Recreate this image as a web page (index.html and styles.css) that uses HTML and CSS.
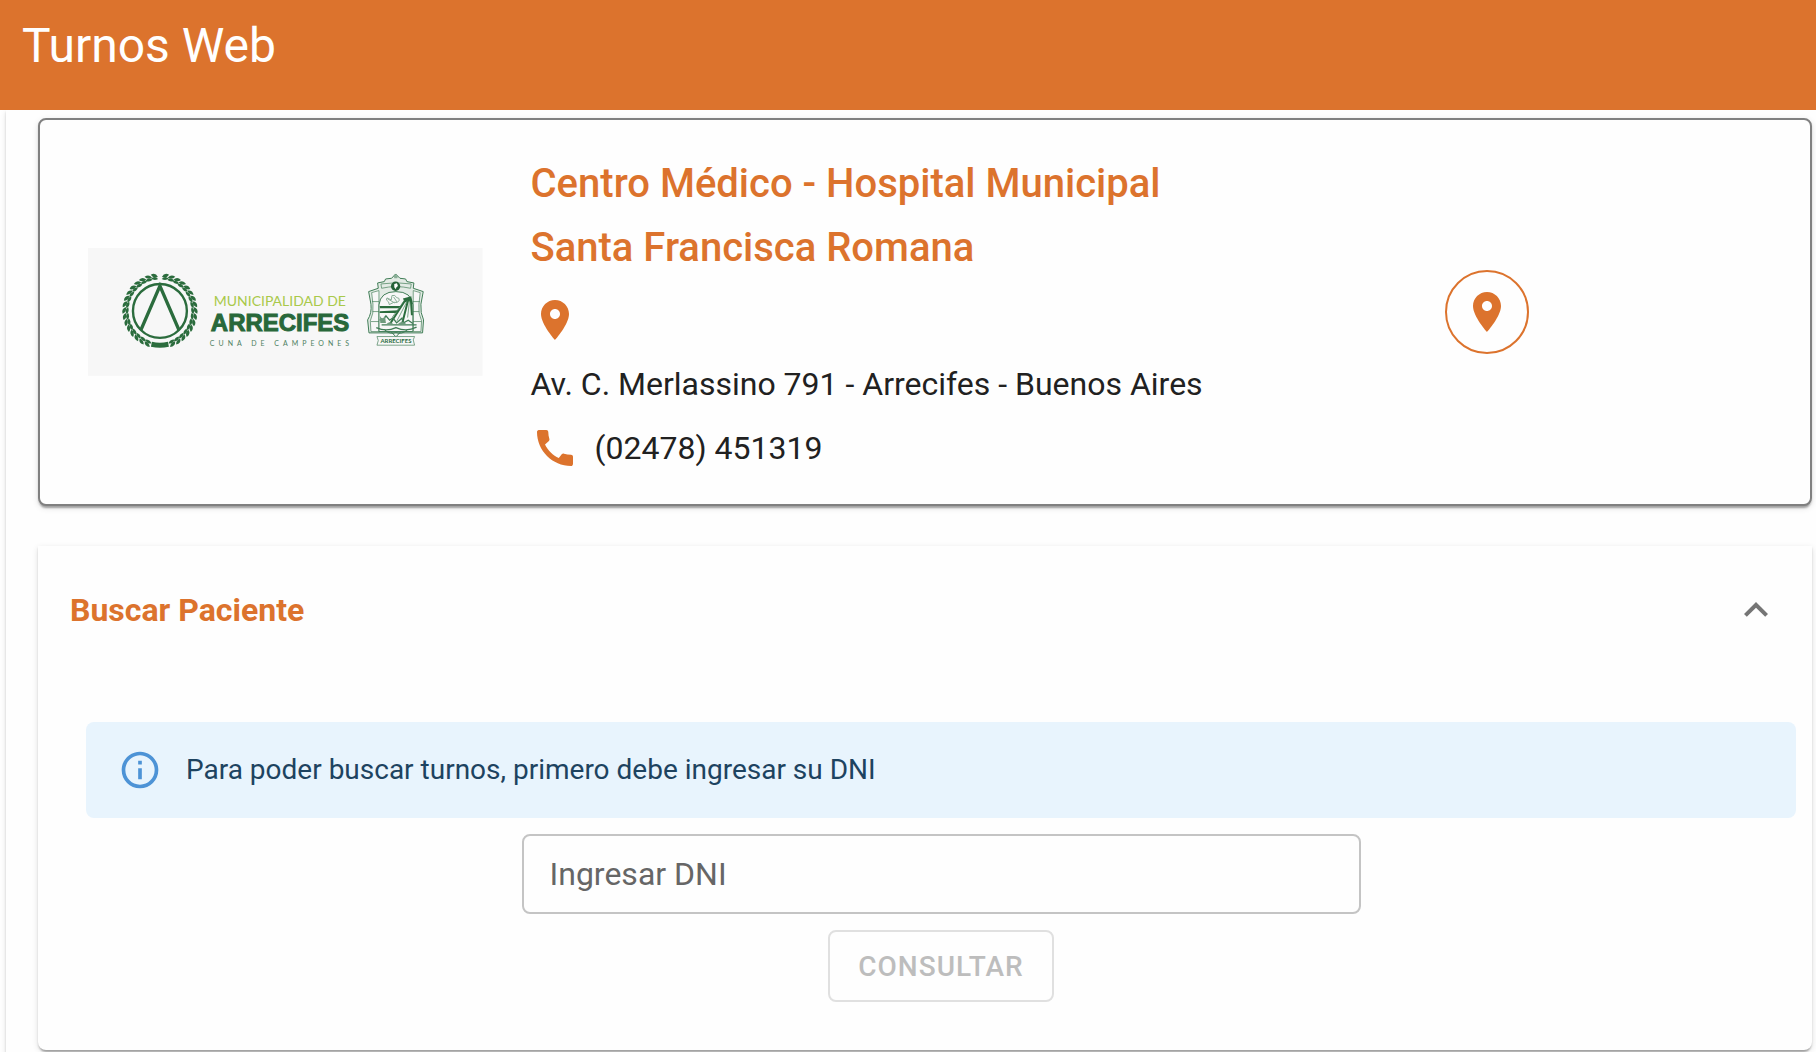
FILE: index.html
```html
<!DOCTYPE html>
<html lang="es">
<head>
    <meta charset="utf-8" />
    <meta name="viewport" content="width=device-width, initial-scale=1" />
    <title>Turnos Web</title>
    <link rel="stylesheet" href="styles.css">
</head>
<body>
    <header class="topbar">
        <h1>Turnos Web</h1>
    </header>

    <main class="container">
        <section class="card centro">
            <div class="centro_logo">
                <svg viewBox="0 0 395 128" role="img" aria-label="Municipalidad de Arrecifes">
                    <defs>
                        <!-- laurel: one pair of leaves, doubled up to 16 -->
                        <g id="l1">
                            <path d="M-1-32Q2-36 6-33Q3-30-1-32Z" />
                            <path d="M-1-34Q1-39 6-37Q4-33-1-34Z" />
                        </g>
                        <g id="l2"><use href="#l1" /><use href="#l1" transform="rotate(10)" /></g>
                        <g id="l4"><use href="#l2" /><use href="#l2" transform="rotate(20)" /></g>
                        <g id="l8"><use href="#l4" /><use href="#l4" transform="rotate(40)" /></g>
                        <g id="l16"><use href="#l8" /><use href="#l8" transform="rotate(80)" /></g>
                    </defs>
                    <rect width="395" height="128" fill="#f7f7f7" />

                    <g transform="translate(72 63)" fill="#2b6c3d">
                        <use href="#l16" transform="rotate(5)" />
                        <use href="#l16" transform="scale(-1 1) rotate(5)" />
                        <path d="M-8 31Q0 33 8 31L9 36Q0 38-9 36Z" />
                        <circle r="27" fill="none" stroke="#2b6c3d" stroke-width="2.4" />
                        <path d="M-19 19L0-25L19 19" fill="none" stroke="#2b6c3d" stroke-width="3.4" />
                    </g>

                    <text class="logo_muni" x="126" y="58">MUNICIPALIDAD DE</text>
                    <text class="logo_arre" x="123" y="83">ARRECIFES</text>
                    <text class="logo_cuna" x="122" y="98">CUNA DE CAMPEONES</text>

                    <!-- escudo -->
                    <g transform="translate(262 17) scale(.3333)" fill="none" stroke="#3f7c55" stroke-width="3">
                        <path d="M57 80L86 70L84 54L104 50L108 42L126 40L138 27L151 40L168 42L172 50L193 54L191 70L221 80L214 118Q212 145 222 165L219 204H58L54 165Q67 145 64 118Z" fill="#e3ebe5" />
                        <path d="M66 83L88 77V200H64L62 168Q73 146 70 118ZM212 83L191 77V200H214L216 168Q205 146 208 118Z" stroke-width="2" fill="#f7f7f7" />
                        <path d="M88 200V120Q92 80 139 80Q186 80 190 120V200Z" fill="#f7f7f7" />
                        <path d="M67 110H88M69 140H88M64 170H88M190 110H211M190 140H209M190 170H215M94 57Q139 50 185 57L183 70Q139 60 96 70Z" stroke-width="2" />
                        <path d="M133 34L138 29L145 34L143 40H134Z" fill="#89ae96" stroke="none" />
                        <circle cx="138" cy="64" r="14" fill="#246238" stroke="none" />
                        <path d="M134 57L142 55L145 63L140 68L139 73L134 67Z" fill="#fff" stroke="none" />
                        <path d="M90 123H155L146 130H91ZM90 139L148 136L139 144H90Z" fill="#2b6c3d" stroke="none" />
                        <path d="M160 101L185 94L188 112Q177 106 166 113Z" fill="#2b6c3d" stroke="none" />
                        <path d="M169 103L122 176M176 104L158 175M184 106L187 151" stroke="#2b6c3d" stroke-width="6" />
                        <path d="M174 106L142 168M180 106L174 158M166 104L128 157" stroke-width="2" />
                        <path d="M117 111Q106 105 112 99L125 105L127 92Q137 88 141 98Q151 98 149 107Q143 116 133 112L119 119ZM132 96L142 111M113 101L135 114" stroke="#89ae96" />
                        <path d="M90 165H101L109 153L120 166L130 159L141 174L157 160L162 174L176 166L190 176M96 180H201M80 188Q110 202 139 188Q170 202 201 187" stroke-width="4" />
                        <path d="M91 153Q98 167 106 153L109 174H92ZM110 178Q121 166 132 179ZM145 177Q157 165 170 177Z" fill="#6e9b7d" stroke="none" />
                        <path d="M104 194Q121 210 139 203Q157 210 174 194M125 201L139 216L153 201" />
                        <path d="M82 215L195 215L191 225L195 241H82L86 227Z" fill="#f7f7f7" stroke-width="2" />
                        <text class="logo_escudo" x="139" y="235">ARRECIFES</text>
                    </g>
                </svg>
            </div>

            <div class="centro_datos">
                <h2>Centro Médico - Hospital Municipal Santa Francisca Romana</h2>
                <div class="dato">
                    <svg class="icon" viewBox="0 0 24 24" aria-hidden="true"><path d="M12 2C8.13 2 5 5.13 5 9c0 5.25 7 13 7 13s7-7.75 7-13c0-3.87-3.13-7-7-7zm0 9.500c-1.380 0-2.500-1.120-2.500-2.500s1.120-2.500 2.500-2.500 2.500 1.120 2.500 2.500-1.120 2.500-2.500 2.500z" /></svg>
                </div>
                <p>Av. C. Merlassino 791 - Arrecifes - Buenos Aires</p>
                <div class="dato">
                    <svg class="icon" viewBox="0 0 24 24" aria-hidden="true"><path d="M20.010 15.380c-1.230 0-2.420-.2-3.530-.56-.35-.12-.74-.03-1.010.24l-1.570 1.970c-2.830-1.350-5.480-3.900-6.890-6.830l1.950-1.660c.27-.28.35-.67.24-1.020-.37-1.110-.56-2.300-.56-3.530 0-.54-.45-.99-.99-.99H4.190C3.650 3 3 3.240 3 3.990 3 13.280 10.730 21 20.010 21c.71 0 .99-.63.99-1.180v-3.450c0-.54-.45-.99-.99-.99z" /></svg>
                    <p>(02478) 451319</p>
                </div>
            </div>

            <div class="centro_mapa">
                <a class="btn_mapa" href="#mapa" aria-label="Ver en el mapa">
                    <svg class="icon" viewBox="0 0 24 24" aria-hidden="true"><path d="M12 2C8.13 2 5 5.13 5 9c0 5.25 7 13 7 13s7-7.75 7-13c0-3.870-3.130-7-7-7zm0 9.500c-1.380 0-2.500-1.120-2.500-2.500s1.120-2.500 2.500-2.500 2.500 1.120 2.500 2.500-1.120 2.500-2.500 2.500z" /></svg>
                </a>
            </div>
        </section>

        <section class="card panel">
            <button type="button" class="panel_titulo" aria-expanded="true" aria-controls="buscar">
                <span>Buscar Paciente</span>
                <svg class="icon" viewBox="0 0 24 24" aria-hidden="true"><path d="M12 8l-6 6 1.410 1.410L12 10.830l4.590 4.580L18 14z" /></svg>
            </button>

            <form class="buscar" id="buscar">
                <div class="alerta" role="alert">
                    <svg viewBox="0 0 24 24" aria-hidden="true"><path d="M11 7h2v2h-2zM11 11h2v6h-2zM12 2C6.480 2 2 6.480 2 12s4.480 10 10 10 10-4.480 10-10S17.520 2 12 2zm0 18c-4.410 0-8-3.590-8-8s3.590-8 8-8 8 3.590 8 8-3.590 8-8 8z" /></svg>
                    <span>Para poder buscar turnos, primero debe ingresar su DNI</span>
                </div>
                <div class="campo">
                    <input type="text" id="dni" name="dni" placeholder=" " />
                    <label for="dni">Ingresar DNI</label>
                </div>
                <button type="submit" class="btn_consultar" disabled>Consultar</button>
            </form>
        </section>
    </main>
</body>
</html>
```
FILE: styles.css
```css
* {
    margin: 0;
    padding: 0;
    box-sizing: border-box;
}

body {
    font-family: Roboto, Arial, sans-serif;
    font-size: 32px;
    color: #212121;
    background: #fff;
}

.topbar {
    position: relative;
    background: #dc732d;
    color: #fff;
    padding: 14px 22px 32px;
}

.topbar h1 {
    font-size: 48px;
    font-weight: 400;
    line-height: 64px;
}

.container {
    margin-left: 6px;
    padding: 8px 4px 32px 32px;
    background: #fefefe;
    box-shadow: 0 4px 2px -2px rgba(0,0,0,.2), 0 2px 2px rgba(0,0,0,.14), 0 2px 6px rgba(0,0,0,.12);
    display: flex;
    flex-direction: column;
    gap: 40px;
}

.card {
    background: #fefefe;
    border-radius: 8px;
    box-shadow: 0 4px 2px -2px rgba(0,0,0,.2), 0 2px 2px rgba(0,0,0,.14), 0 2px 6px rgba(0,0,0,.12);
}

.icon {
    display: block;
    width: 48px;
    height: 48px;
    fill: #dc732d;
    flex: none;
}

/* datos del centro */
.centro {
    border: 2px solid #808080;
    padding: 32px 0 24px;
    display: grid;
    grid-template-columns: 3fr 5fr 4fr;
}

.centro_logo {
    padding-left: 48px;
    padding-bottom: 8px;
    align-self: center;
}

.centro_logo svg {
    display: block;
    width: 100%;
}

.logo_muni {
    font: 400 14px Lato, sans-serif;
    fill: #a9c94a;
}

.logo_arre {
    font: 700 24px "Liberation Sans", Arial, sans-serif;
    fill: #28683a;
    stroke: #28683a;
    stroke-width: 1px;
}

.logo_cuna {
    font: 400 7px Lato, sans-serif;
    letter-spacing: 4px;
    fill: #4d8060;
}

.logo_escudo {
    font: 700 18px Lato, sans-serif;
    text-anchor: middle;
    fill: #2b6c3d;
    stroke: none;
}

.centro_datos {
    padding-left: 48px;
    line-height: 64px;
}

.centro_datos h2 {
    font-size: 40px;
    font-weight: 500;
    color: #dc732d;
}

.dato {
    display: flex;
    align-items: center;
    gap: 16px;
    height: 64px;
}

.dato:first-of-type {
    margin-top: 8px;
}

.centro_mapa {
    padding-right: 56px;
    padding-bottom: 8px;
    align-self: center;
    display: flex;
    justify-content: center;
}

.btn_mapa {
    width: 84px;
    height: 84px;
    border: 2px solid #dc732d;
    border-radius: 50%;
    display: flex;
    align-items: center;
    justify-content: center;
}

/* buscar paciente */
.panel {
    border-radius: 0 0 8px 8px;
}

.panel_titulo {
    width: 100%;
    height: 128px;
    padding: 0 32px;
    border: none;
    background: none;
    display: flex;
    align-items: center;
    justify-content: space-between;
    font: 700 32px Roboto, Arial, sans-serif;
    color: #dc732d;
    cursor: pointer;
}

.panel_titulo .icon {
    fill: #757575;
}

.buscar {
    padding: 48px 16px 48px 48px;
    display: flex;
    flex-direction: column;
    align-items: center;
    gap: 16px;
}

.alerta {
    width: 100%;
    padding: 26px 32px;
    border-radius: 8px;
    background: #e8f4fd;
    color: #1d4360;
    font-size: 28px;
    line-height: 44px;
    display: flex;
    align-items: center;
    gap: 24px;
}

.alerta svg {
    width: 44px;
    height: 44px;
    fill: #4d93d6;
    flex: none;
}

.campo {
    position: relative;
    width: calc(50% - 16px);
}

.campo input {
    display: block;
    width: 100%;
    height: 80px;
    padding: 0 26px;
    border: 2px solid #c4c4c4;
    border-radius: 8px;
    background: none;
    font: 400 32px Roboto, Arial, sans-serif;
    color: #212121;
}

.campo label {
    position: absolute;
    top: 0;
    left: 28px;
    line-height: 80px;
    color: #666;
    pointer-events: none;
}

.campo input:focus + label,
.campo input:not(:placeholder-shown) + label {
    top: -40px;
    font-size: 24px;
}

.btn_consultar {
    height: 72px;
    padding: 0 28px;
    border: 2px solid #e0e0e0;
    border-radius: 8px;
    background: none;
    color: #bdbdbd;
    font: 500 28px Roboto, Arial, sans-serif;
    letter-spacing: 1px;
    text-transform: uppercase;
}
```
